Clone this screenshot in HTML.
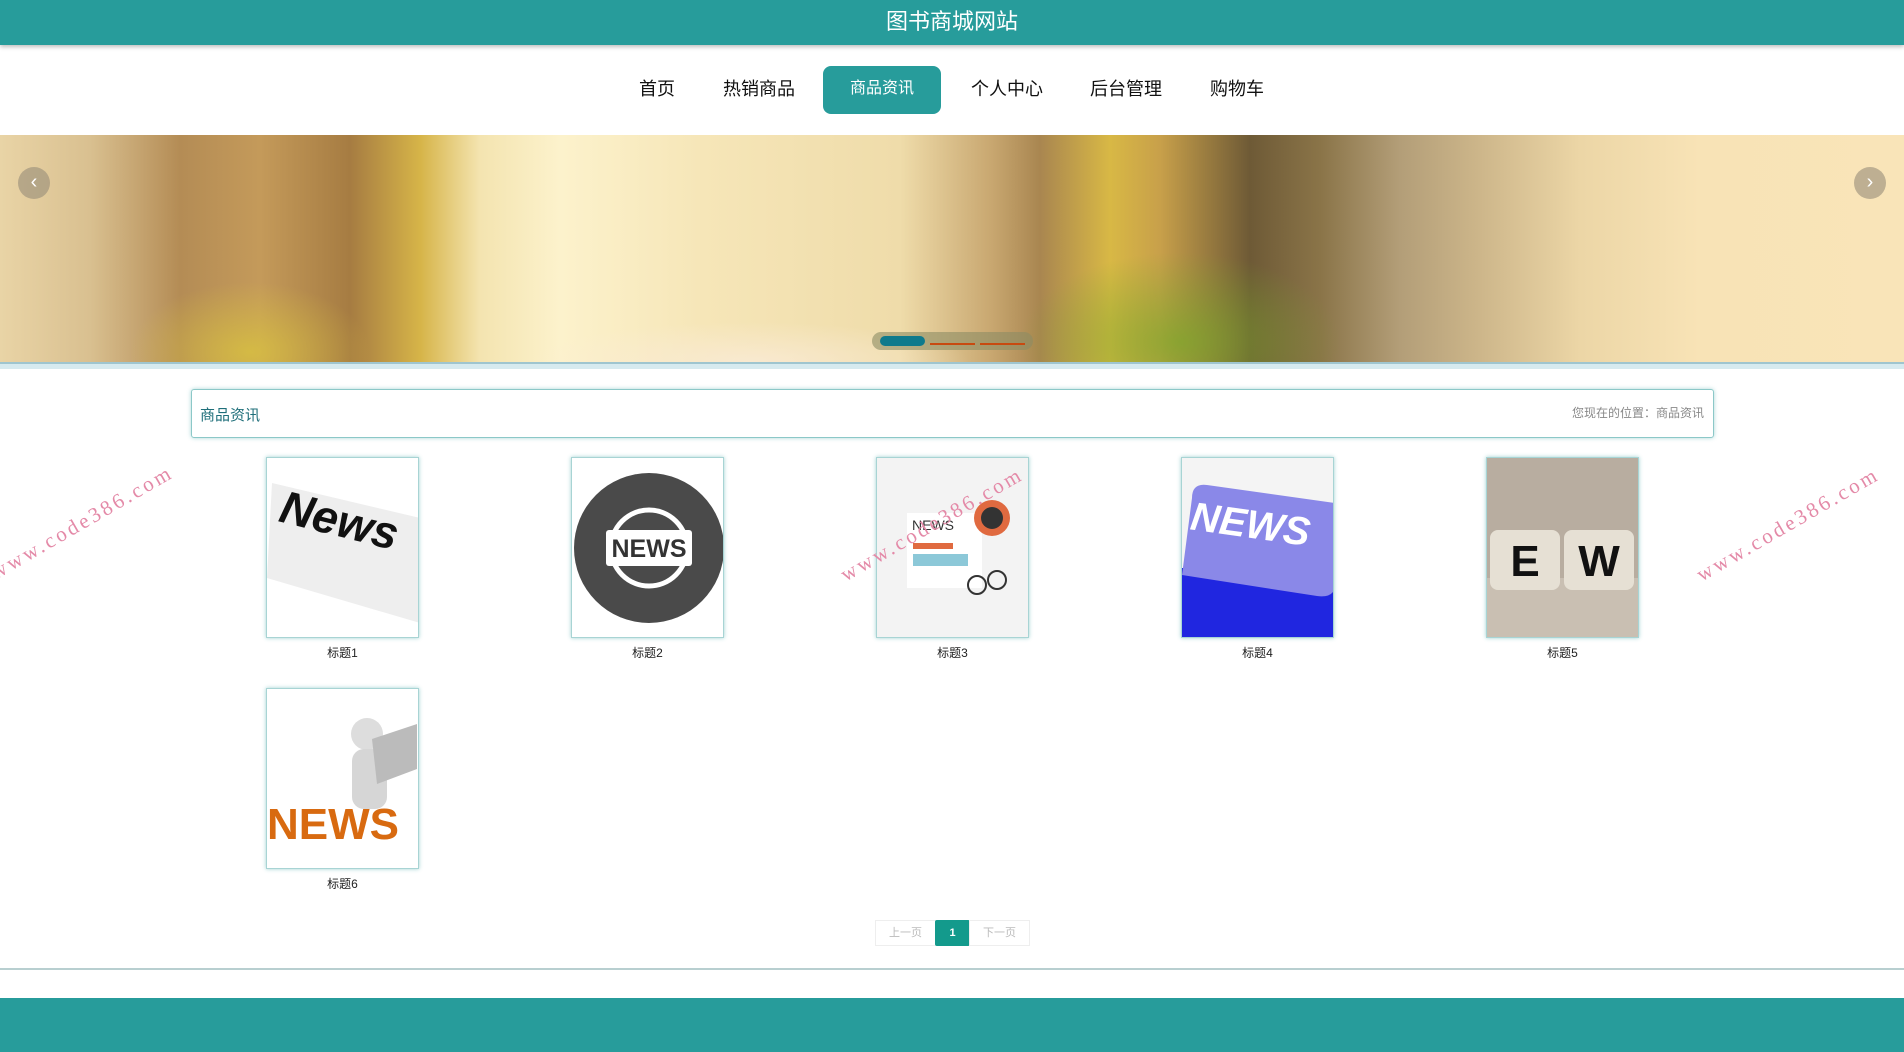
<!DOCTYPE html>
<html><head><meta charset="utf-8">
<style>
*{margin:0;padding:0;box-sizing:border-box}
body{width:1904px;height:1052px;overflow:hidden;background:#fff;font-family:"Liberation Sans","Noto Sans CJK SC",sans-serif;position:relative}
.hdr{position:absolute;left:0;top:0;width:1904px;height:45px;background:#279c9b;color:#fff;font-size:22px;text-align:center;line-height:44px;box-shadow:0 2px 4px rgba(0,0,0,.25)}
.nav{position:absolute;top:66px;left:0;width:1904px;height:48px}
.nav span{position:absolute;top:0;height:48px;line-height:46px;font-size:18px;color:#111}
.nav .act{background:#279c9b;color:#fff;border-radius:8px;width:118px;text-align:center;font-size:16px;left:823px}
.banner{position:absolute;left:0;top:135px;width:1904px;height:227px;overflow:hidden;
background:linear-gradient(90deg,#e9d4a6 0,#d9c090 90px,#b48c55 180px,#c49a5a 260px,#a67c42 350px,#d6b448 420px,#f4e4b0 480px,#fcf2cc 560px,#f6e6b8 700px,#efdcaa 900px,#c9a871 990px,#a98650 1040px,#d8b845 1110px,#c8a04a 1160px,#6e5a36 1250px,#8a7448 1320px,#b39e78 1400px,#cdb68a 1480px,#ecd6a6 1580px,#f8e3b6 1700px,#f9e4b8 1904px)}
.banner .g{position:absolute;left:0;bottom:0;width:1904px;height:120px;background:
radial-gradient(ellipse 120px 70px at 250px 110px,rgba(220,200,60,.7),transparent),
radial-gradient(ellipse 160px 90px at 1180px 100px,rgba(120,170,40,.7),transparent),
radial-gradient(ellipse 220px 40px at 750px 120px,rgba(250,235,215,.8),transparent)}
.arr{position:absolute;top:32px;width:32px;height:32px;border-radius:50%;background:rgba(150,140,120,.6);color:#fff;text-align:center;line-height:30px;font-size:20px}
.dots{position:absolute;left:872px;top:197px;width:161px;height:18px;border-radius:9px;background:rgba(140,140,100,.6)}
.dots i{position:absolute;display:block}
.ln1{position:absolute;left:0;top:362px;width:1904px;height:7px;background:#d6eaef;border-top:2px solid #9fc5cf}
.bc{position:absolute;left:191px;top:389px;width:1523px;height:49px;border:1px solid #8cc8c8;border-radius:3px;box-shadow:0 0 4px rgba(39,156,155,.4)}
.bc b{font-weight:normal;position:absolute;left:8px;top:14px;font-size:15px;color:#1f6f7a}
.bc s{text-decoration:none;position:absolute;right:9px;top:14px;font-size:12px;color:#888}
.card{position:absolute;width:153px;height:181px;border:1px solid #a8d4d4;box-shadow:0 0 4px rgba(39,156,155,.45);overflow:hidden;background:#fff}
.card svg{display:block}
.lbl{position:absolute;width:153px;text-align:center;font-size:12px;color:#222}
.pg{position:absolute;top:920px;height:26px;border:1px solid #eee;font-size:11px;color:#bbb;text-align:center;line-height:24px}
.ft{position:absolute;left:0;top:998px;width:1904px;height:54px;background:#279c9b}
.wm{position:absolute;width:220px;margin-left:-110px;text-align:center;font-family:"Liberation Serif",serif;font-size:21px;letter-spacing:3px;color:#e48aa8;transform:rotate(-30deg);white-space:nowrap;z-index:5}
</style></head><body>
<div class="hdr">图书商城网站</div>
<div class="nav">
<span style="left:639px">首页</span>
<span style="left:723px">热销商品</span>
<span class="act">商品资讯</span>
<span style="left:971px">个人中心</span>
<span style="left:1090px">后台管理</span>
<span style="left:1210px">购物车</span>
</div>
<div class="banner"><div class="g"></div>
<div class="arr" style="left:18px">‹</div>
<div class="arr" style="left:1854px">›</div>
<div class="dots"><i style="left:8px;top:4px;width:45px;height:10px;border-radius:5px;background:#0e7a8c"></i><i style="left:58px;top:11px;width:45px;height:2px;background:#c84a10"></i><i style="left:108px;top:11px;width:45px;height:2px;background:#c84a10"></i></div>
</div>
<div class="ln1"></div>
<div class="bc"><b>商品资讯</b><s>您现在的位置：商品资讯</s></div>

<div class="card" style="left:266px;top:457px"><svg width="153" height="181"><rect width="153" height="181" fill="#fff"/><polygon points="5,25 153,60 153,165 0,120" fill="#eee"/><text x="8" y="78" font-family="Liberation Sans" font-weight="bold" font-style="italic" font-size="46" fill="#111" transform="rotate(14 70 80)">News</text></svg></div>
<div class="card" style="left:571px;top:457px"><svg width="153" height="181"><rect width="153" height="181" fill="#fff"/><circle cx="77" cy="90" r="75" fill="#4a4a4a"/><circle cx="77" cy="90" r="38" fill="none" stroke="#fff" stroke-width="5"/><rect x="34" y="72" width="86" height="36" rx="3" fill="#fff"/><text x="77" y="99" text-anchor="middle" font-family="Liberation Sans" font-weight="bold" font-size="25" fill="#333">NEWS</text></svg></div>
<div class="card" style="left:876px;top:457px"><svg width="153" height="181"><rect width="153" height="181" fill="#f3f3f3"/><rect x="30" y="55" width="75" height="75" fill="#fff"/><text x="35" y="72" font-family="Liberation Sans" font-size="14" fill="#333">NEWS</text><rect x="36" y="85" width="40" height="6" fill="#e06a40"/><rect x="36" y="96" width="55" height="12" fill="#8cc8d8"/><circle cx="115" cy="60" r="18" fill="#e06a40"/><circle cx="115" cy="60" r="11" fill="#333"/><circle cx="100" cy="127" r="9" fill="none" stroke="#333" stroke-width="2"/><circle cx="120" cy="122" r="9" fill="none" stroke="#333" stroke-width="2"/></svg></div>
<div class="card" style="left:1181px;top:457px"><svg width="153" height="181"><rect width="153" height="181" fill="#f4f4f4"/><rect x="0" y="110" width="153" height="71" fill="#2026e0"/><path d="M10 40 Q10 25 25 27 L153 45 L153 130 Q150 140 135 138 L0 117 Z" fill="#8a88e8"/><text x="8" y="80" font-family="Liberation Sans" font-weight="bold" font-style="italic" font-size="40" fill="#fff" transform="rotate(8 70 70)">NEWS</text></svg></div>
<div class="card" style="left:1486px;top:457px"><svg width="153" height="181"><rect width="153" height="181" fill="#b8ada0"/><rect y="120" width="153" height="61" fill="#c9bfb2"/><rect x="3" y="72" width="70" height="60" rx="8" fill="#e6e0d4"/><rect x="77" y="72" width="70" height="60" rx="8" fill="#e6e0d4"/><text x="38" y="118" text-anchor="middle" font-family="Liberation Sans" font-weight="bold" font-size="44" fill="#111">E</text><text x="112" y="118" text-anchor="middle" font-family="Liberation Sans" font-weight="bold" font-size="44" fill="#111">W</text></svg></div>
<div class="card" style="left:266px;top:688px"><svg width="153" height="181"><rect width="153" height="181" fill="#fff"/><circle cx="100" cy="45" r="16" fill="#ddd"/><rect x="85" y="60" width="35" height="60" rx="12" fill="#d6d6d6"/><polygon points="105,50 150,35 150,80 110,95" fill="#bbb"/><text x="0" y="150" font-family="Liberation Sans" font-weight="bold" font-size="44" fill="#d86a10">NEWS</text></svg></div>

<div class="lbl" style="left:266px;top:644px">标题1</div>
<div class="lbl" style="left:571px;top:644px">标题2</div>
<div class="lbl" style="left:876px;top:644px">标题3</div>
<div class="lbl" style="left:1181px;top:644px">标题4</div>
<div class="lbl" style="left:1486px;top:644px">标题5</div>
<div class="lbl" style="left:266px;top:875px">标题6</div>

<div class="wm" style="left:82px;top:510px">www.code386.com</div>
<div class="wm" style="left:932px;top:512px">www.code386.com</div>
<div class="wm" style="left:1788px;top:512px">www.code386.com</div>

<div class="pg" style="left:875px;width:61px">上一页</div>
<div class="pg" style="left:935px;width:35px;background:#139a8c;border-color:#139a8c;color:#fff;font-weight:bold;border-radius:2px">1</div>
<div class="pg" style="left:969px;width:61px">下一页</div>
<div style="position:absolute;left:0;top:968px;width:1904px;height:2px;background:#b8cfd0"></div>
<div class="ft"></div>
</body></html>
